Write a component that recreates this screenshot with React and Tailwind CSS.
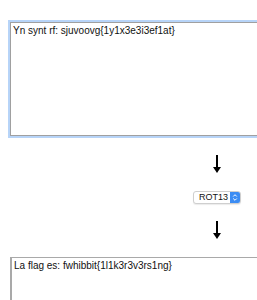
import React from "react";

const DownArrow = () => (
  <svg width="10" height="18" viewBox="0 0 10 18" className="block">
    <line x1="5" y1="0" x2="5" y2="13" stroke="#000" strokeWidth="2" />
    <polygon points="1,12 9,12 5,18" fill="#000" />
  </svg>
);

const App = () => {
  return (
    <div className="w-[257px] h-[300px] overflow-hidden bg-white font-['Liberation_Sans',Arial,sans-serif] text-[10px] text-[#111]">
      <div className="w-[434px] flex flex-col items-center">
        <textarea
          readOnly
          defaultValue="Yn synt rf: sjuvoovg{1y1x3e3i3ef1at}"
          className="mt-[22px] w-[414px] h-[114px] resize-none p-[2px] leading-[12px] border border-[#a0a0a0] shadow-[0_0_0_2px_#b7d4f8] outline-none bg-white"
        />
        <div className="mt-[19px]">
          <DownArrow />
        </div>
        <div className="mt-[18px] flex h-[13px] w-[48px] items-stretch rounded-[3px] border border-[#cfcfcf] bg-white overflow-hidden shadow-[0_1px_1px_rgba(0,0,0,0.08)]">
          <span className="flex-1 flex items-center pl-[5px] text-[9px] leading-none text-[#111]">ROT13</span>
          <span className="w-[10px] flex items-center justify-center bg-[#3b8cf3]">
            <svg width="6" height="9" viewBox="0 0 6 9">
              <polyline points="1.2,3.5 3,1.7 4.8,3.5" fill="none" stroke="#fff" strokeWidth="1" />
              <polyline points="1.2,5.5 3,7.3 4.8,5.5" fill="none" stroke="#fff" strokeWidth="1" />
            </svg>
          </span>
        </div>
        <div className="mt-[17px]">
          <DownArrow />
        </div>
        <textarea
          readOnly
          defaultValue="La flag es: fwhibbit{1l1k3r3v3rs1ng}"
          className="mt-[18px] w-[414px] h-[114px] resize-none p-[2px] leading-[12px] border border-[#a9a9a9] border-l-2 outline-none bg-white"
        />
      </div>
    </div>
  );
};

export default App;
